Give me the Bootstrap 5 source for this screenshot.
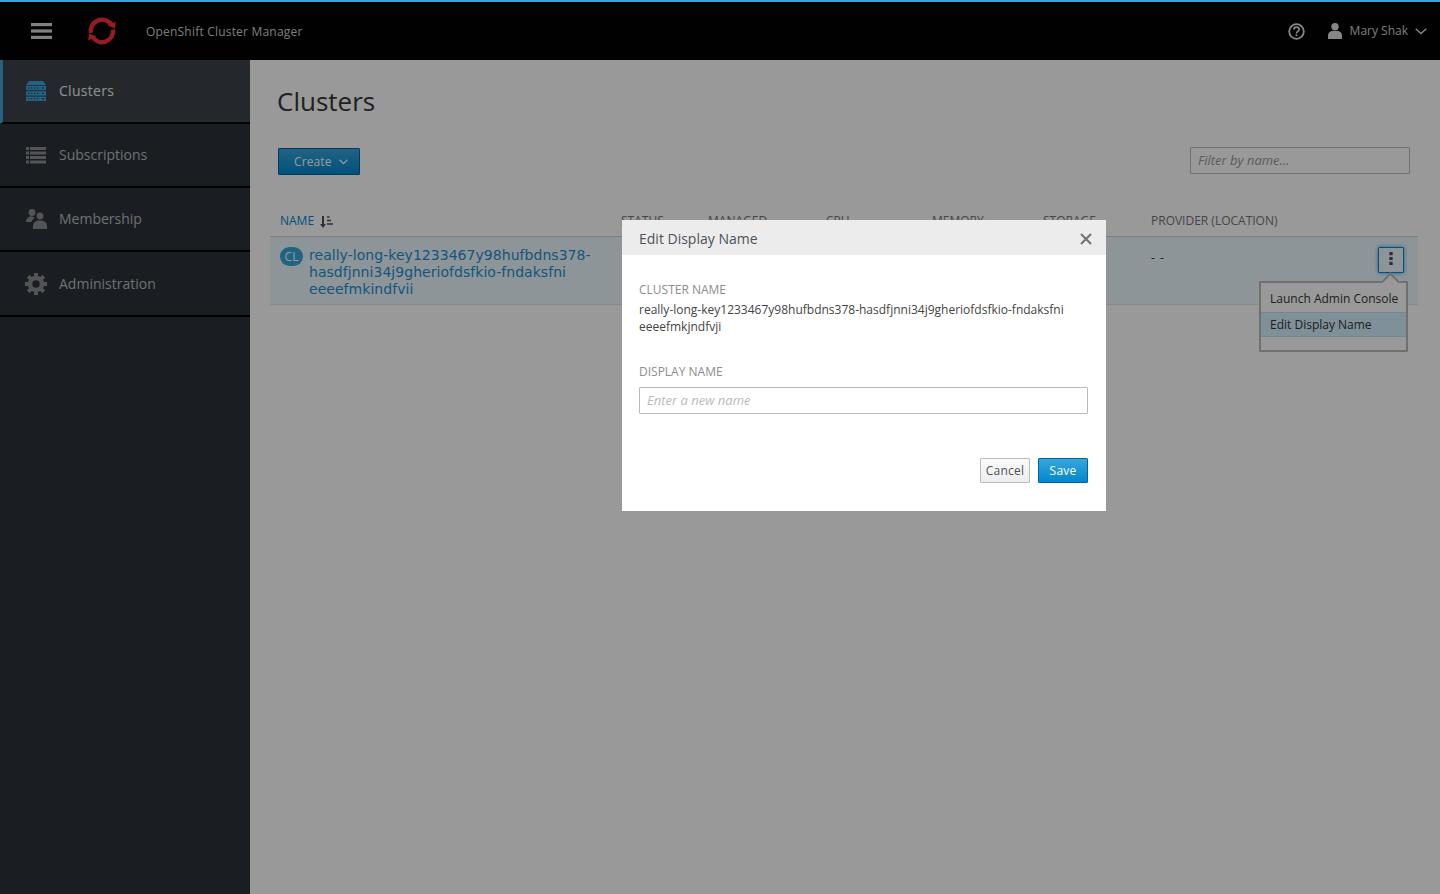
<!DOCTYPE html>
<html lang="en">
<head>
<meta charset="utf-8">
<title>OpenShift Cluster Manager</title>
<link href="https://cdn.jsdelivr.net/npm/bootstrap@5.3.0/dist/css/bootstrap.min.css" rel="stylesheet">
<style>
html,body{height:100%;margin:0;overflow:hidden}
body{font-family:"Open Sans","Noto Sans",sans-serif;font-size:12px;color:#363636;background:#fff}
.shell{height:894px;display:flex;flex-direction:column;position:relative}
.top-stripe{height:2px;background:#39a5dc;position:relative;z-index:30}
.top-bar{height:58px;background:#030303;color:#d1d1d1;flex:none;padding:0}
.burger{width:21px;height:16px;margin-left:31px;margin-top:-1px}
.logo-mark{width:30px;height:30px;margin-left:35px;margin-top:-1px}
.brand-name{margin-left:29px;font-size:12px;letter-spacing:.2px;color:#d1d1d1;margin-top:1px}
.help-ico{width:17px;height:17px;margin-right:23px}
.user-ico{width:14px;height:16px;margin-right:8px}
.user-name{font-size:12px;color:#d1d1d1}
.caret-ico{width:12px;height:7px;margin-left:7px;margin-right:13px}
.lower{flex:1;display:flex;min-height:0}
.side-nav{width:250px;flex:none;background:#2c333b}
.side-item{height:64px;display:flex;align-items:center;border-bottom:2px solid #050505;color:#b8bcc0;font-size:14px;letter-spacing:0;padding:0 0 2px 59px;position:relative;text-decoration:none}
.side-item:last-child{height:65px;padding-bottom:1px}
.side-item.active-item{background:#3c444b;border-left:3px solid #39a5dc;padding-left:56px;color:#f0f0f0;letter-spacing:.3px}
.side-item svg{position:absolute;left:25px;top:50%;transform:translateY(-50%)}
.side-item.active-item svg{left:22px}
.main-pane{flex:1;min-width:0;background:#fff;padding:0}
.page-ttl{font-size:26px;font-weight:400;margin:23px 0 0 27px;line-height:36px;color:#363636}
.tool-row{margin:29px 30px 0 28px;display:flex;justify-content:space-between;align-items:flex-start}
.btn-create{background:linear-gradient(#39a5dc,#0088ce);border:1px solid #00659c;border-radius:1px;color:#fff;font-size:12px;padding:0 0 0 15px;width:82px;height:27px;letter-spacing:.1px;text-align:left}
.btn-create svg{margin-left:7px}
.filter-box{width:220px;height:27px;margin-top:-1px;border:1px solid #bbb;border-radius:1px;font-size:13px;padding:0 7px 2px;box-shadow:none;font-style:italic}
.filter-box::placeholder{color:#999}
.table-wrap{margin:37px 22px 0 20px;position:relative}
.cl-table{table-layout:fixed;width:1148px;margin:0;--bs-table-bg:transparent;color:#363636}
.cl-table th{font-weight:400;font-size:12px;color:#72767b;padding:0 0 7px 10px;border-bottom:1px solid #d1d1d1;line-height:17px;height:24px;vertical-align:bottom}
.cl-table th.sorted{color:#0088ce}
.sort-ico{margin-left:3px}
.cl-table td{background:#edf8ff;padding:10px 0 6px 10px;border-bottom:1px solid #e5e5e5;height:68px;vertical-align:top;font-size:12px}
.name-cell{display:flex;align-items:flex-start;gap:6px}
.cl-pill{background:#39a5dc;color:#fff;width:23px;height:19px;border-radius:10px;font-size:12px;display:flex;align-items:center;justify-content:center;flex:none}
.cl-link{font-family:"DejaVu Sans",sans-serif;font-size:14px;line-height:17px;color:#1d8fd0;text-decoration:none;letter-spacing:.04px;width:292px}
.dash-val{display:block;margin-top:2px;letter-spacing:1px}
.kebab-btn{position:absolute;left:1108px;top:35px;width:26px;height:26px;border:1px solid #0088ce;background:#edf8ff;border-radius:1px;box-shadow:0 0 4px #39a5dc;display:flex;align-items:center;justify-content:center;padding:0 0 4px}
.action-menu{position:absolute;left:989px;top:69px;width:149px;height:71px;background:#fff;border:2px solid #bbb;border-radius:1px;padding:4px 0 0 0;font-size:12px;color:#363636}
.action-menu::before{content:"";position:absolute;right:9px;top:-8px;width:13px;height:13px;background:#fff;border-left:2px solid #bbb;border-top:2px solid #bbb;transform:rotate(45deg)}
.menu-row{height:24px;line-height:24px;padding-left:9px;position:relative;white-space:nowrap}
.menu-row.lit{background:#d4f0ff;border-top:1px solid #bee1f4;border-bottom:1px solid #bee1f4;height:25px;margin-top:1px}
.dim-layer{position:absolute;left:0;right:0;top:2px;bottom:0;background:#000;opacity:.4;z-index:10}
.name-dialog{position:absolute;left:622px;top:220px;width:484px;height:291px;z-index:20;border:0;border-radius:0;background:#fff}
.name-dialog .modal-header{height:35px;background:#ececec;border:0;border-radius:0;padding:0 14px 0 17px;display:flex;justify-content:space-between;align-items:center}
.dialog-ttl{font-size:14px;font-weight:400;margin:4px 0 0;color:#4d5258;letter-spacing:0}
.close-x{background:none;border:0;padding:0;line-height:0;margin-top:2px}
.name-dialog .modal-body{padding:27px 18px 0 17px}
.field-lbl{font-size:12px;color:#8b8d8f;line-height:16px;text-transform:uppercase;margin:0}
.field-val{font-size:12px;line-height:17px;color:#444;margin:3px 0 0;letter-spacing:0;word-break:normal}
.second-lbl{margin-top:29px}
.name-input{height:27px;margin-top:7px;border:1px solid #bbb;border-radius:1px;font-size:13px;font-style:italic;padding:0 7px 2px;box-shadow:none}
.name-input::placeholder{color:#bbb}
.dialog-actions{display:flex;justify-content:flex-end;gap:8px;margin-top:44px}
.btn-plain,.btn-save{width:50px;height:25px;padding:0;font-size:12px;border-radius:1px;letter-spacing:.2px}
.btn-plain{background:linear-gradient(#fafafa,#ededed);border:1px solid #bbb;color:#4d5258}
.btn-save{background:linear-gradient(#39a5dc,#0088ce);border:1px solid #00659c;color:#fff}
</style>
</head>
<body>
<div class="shell">
  <div class="top-stripe"></div>
  <nav class="navbar top-bar d-flex align-items-center flex-nowrap justify-content-start">
    <svg class="burger" viewBox="0 0 21 16"><rect width="21" height="3.2" y="0" fill="#d8d8d8"/><rect width="21" height="3.2" y="6.4" fill="#d8d8d8"/><rect width="21" height="3.2" y="12.8" fill="#d8d8d8"/></svg>
    <svg class="logo-mark" viewBox="0 0 30 30"><g fill="none" stroke="#f82c38" stroke-width="4.4"><path d="M3.900 17A11.300 11.300 0 0 1 24.800 9.300"/><path d="M26.100 13.500A11.300 11.300 0 0 1 5.200 20.700"/></g><path fill="#f82c38" d="M20.500 9.500 L28.800 5.500 L28 12.500 Z M9.500 20.500 L1.200 24.500 L2 17.500 Z"/></svg>
    <span class="brand-name">OpenShift Cluster Manager</span>
    <div class="ms-auto d-flex align-items-center">
      <svg class="help-ico" viewBox="0 0 17 17"><circle cx="8.5" cy="8.5" r="7.3" fill="none" stroke="#e0e0e0" stroke-width="1.8"/><path d="M5.9 6.6c0-1.5 1.2-2.4 2.6-2.4s2.6.9 2.6 2.2c0 2-2.6 2-2.6 4" fill="none" stroke="#e0e0e0" stroke-width="1.7"/><rect x="7.6" y="11.4" width="1.8" height="1.8" fill="#e0e0e0"/></svg>
      <svg class="user-ico" viewBox="0 0 14 16"><circle cx="7" cy="3.7" r="3.7" fill="#e0e0e0"/><path d="M0 16v-3.5C0 9.5 2.5 8 4.5 8h5c2 0 4.5 1.5 4.5 4.5V16z" fill="#e0e0e0"/></svg>
      <span class="user-name">Mary Shak</span>
      <svg class="caret-ico" viewBox="0 0 12 7"><path d="M.7.8 6 5.6 11.300.8" fill="none" stroke="#e0e0e0" stroke-width="1.4"/></svg>
    </div>
  </nav>
  <div class="lower">
    <aside class="side-nav">
      <a class="side-item active-item" href="#">
        <svg width="22" height="22" viewBox="0 0 22 22"><path fill="#39a5dc" d="M4 1h14l3 4H1z"/><rect x="1" y="5.800" width="20" height="4.400" fill="#39a5dc"/><rect x="1" y="11.200" width="20" height="4.400" fill="#39a5dc"/><rect x="1" y="16.600" width="20" height="4.400" fill="#39a5dc"/><g fill="#3c444b"><rect x="3" y="7.400" width="1.400" height="1.200"/><rect x="6" y="7.400" width="1.400" height="1.200"/><rect x="9" y="7.400" width="1.400" height="1.200"/><rect x="12" y="7.400" width="1.400" height="1.200"/><rect x="17" y="7.400" width="2" height="1.200"/><rect x="3" y="12.800" width="1.400" height="1.200"/><rect x="6" y="12.800" width="1.400" height="1.200"/><rect x="9" y="12.800" width="1.400" height="1.200"/><rect x="12" y="12.800" width="1.400" height="1.200"/><rect x="17" y="12.800" width="2" height="1.200"/><rect x="3" y="18.200" width="1.400" height="1.200"/><rect x="6" y="18.200" width="1.400" height="1.200"/><rect x="9" y="18.200" width="1.400" height="1.200"/><rect x="12" y="18.200" width="1.400" height="1.200"/><rect x="17" y="18.200" width="2" height="1.200"/></g></svg>
        Clusters
      </a>
      <a class="side-item" href="#">
        <svg width="22" height="18" viewBox="0 0 22 18" fill="#8b8d8f"><rect x="1" y="1" width="3" height="3"/><rect x="5" y="1" width="16" height="3"/><rect x="1" y="5.500" width="3" height="3"/><rect x="5" y="5.500" width="16" height="3"/><rect x="1" y="10" width="3" height="3"/><rect x="5" y="10" width="16" height="3"/><rect x="1" y="14.500" width="3" height="3"/><rect x="5" y="14.500" width="16" height="3"/></svg>
        Subscriptions
      </a>
      <a class="side-item" href="#">
        <svg width="22" height="22" viewBox="0 0 22 22" fill="#8b8d8f"><circle cx="7" cy="4.500" r="3.400"/><path d="M1 14c0-3.500 2.500-5.500 5-5.500 1.500 0 2.800.5 3.500 1.300-1.500 1.300-2.800 3-3.200 4.200z"/><circle cx="15" cy="8" r="3.400"/><path d="M8 21v-3c0-3.500 3-5.500 7-5.500s7 2 7 5.500v3z"/></svg>
        Membership
      </a>
      <a class="side-item" href="#">
        <svg width="22" height="22" viewBox="0 0 22 22"><circle cx="11" cy="11" r="6" fill="none" stroke="#8b8d8f" stroke-width="4.500"/><g stroke="#8b8d8f" stroke-width="4"><path d="M11 0v4M11 18v4M0 11h4M18 11h4M3.200 3.200l2.900 2.900M15.900 15.900l2.900 2.900M18.800 3.200l-2.900 2.900M6.100 15.900l-2.900 2.900"/></g></svg>
        Administration
      </a>
    </aside>
    <main class="main-pane">
      <h1 class="page-ttl">Clusters</h1>
      <div class="tool-row">
        <button class="btn btn-create" type="button">Create<svg width="9" height="6" viewBox="0 0 9 6"><path d="M.6.8 4.500 4.600 8.400.8" fill="none" stroke="#fff" stroke-width="1.200"/></svg></button>
        <input class="form-control filter-box" placeholder="Filter by name...">
      </div>
      <div class="table-wrap">
        <table class="table cl-table">
          <colgroup><col style="width:341px"><col style="width:87px"><col style="width:118px"><col style="width:106px"><col style="width:111px"><col style="width:108px"><col style="width:277px"></colgroup>
          <thead><tr>
            <th class="sorted">NAME <svg class="sort-ico" width="13" height="12" viewBox="0 0 13 12"><path d="M3 0v9" stroke="#4d5258" stroke-width="2"/><path d="M0 8h6l-3 4z" fill="#4d5258"/><path d="M7 1h2.500M7 4.500h4M7 8h6" stroke="#4d5258" stroke-width="1.600"/></svg></th>
            <th>STATUS</th><th>MANAGED</th><th>CPU</th><th>MEMORY</th><th>STORAGE</th><th>PROVIDER (LOCATION)</th>
          </tr></thead>
          <tbody><tr>
            <td><div class="name-cell"><span class="cl-pill">CL</span><a class="cl-link" href="#">really-long-key1233467y98hufbdns378-hasdfjnni34j9gheriofdsfkio-fndaksfni eeeefmkindfvii</a></div></td>
            <td></td><td></td><td></td><td></td><td></td>
            <td><span class="dash-val">- -</span></td>
          </tr></tbody>
        </table>
        <button class="kebab-btn" type="button" aria-label="Actions"><svg width="4" height="13" viewBox="0 0 4 13" fill="#4d5258"><rect x=".3" width="3.400" height="3.200" rx=".6"/><rect x=".3" y="4.900" width="3.400" height="3.200" rx=".6"/><rect x=".3" y="9.800" width="3.400" height="3.200" rx=".6"/></svg></button>
        <div class="action-menu">
          <div class="menu-row">Launch Admin Console</div>
          <div class="menu-row lit">Edit Display Name</div>
        </div>
      </div>
    </main>
  </div>
  <div class="dim-layer"></div>
  <div class="modal-content name-dialog">
    <div class="modal-header">
      <h5 class="dialog-ttl">Edit Display Name</h5>
      <button class="close-x" type="button" aria-label="Close"><svg width="12" height="12" viewBox="0 0 12 12"><path d="M1 1l10 10M11 1 1 11" stroke="#72767b" stroke-width="2.200"/></svg></button>
    </div>
    <div class="modal-body">
      <p class="field-lbl">Cluster Name</p>
      <p class="field-val">really-long-key1233467y98hufbdns378-hasdfjnni34j9gheriofdsfkio-fndaksfni eeeefmkjndfvji</p>
      <p class="field-lbl second-lbl">Display Name</p>
      <input class="form-control name-input" placeholder="Enter a new name">
      <div class="dialog-actions">
        <button class="btn btn-plain" type="button">Cancel</button>
        <button class="btn btn-save" type="button">Save</button>
      </div>
    </div>
  </div>
</div>
<script src="https://cdn.jsdelivr.net/npm/bootstrap@5.3.0/dist/js/bootstrap.bundle.min.js"></script>
</body>
</html>
